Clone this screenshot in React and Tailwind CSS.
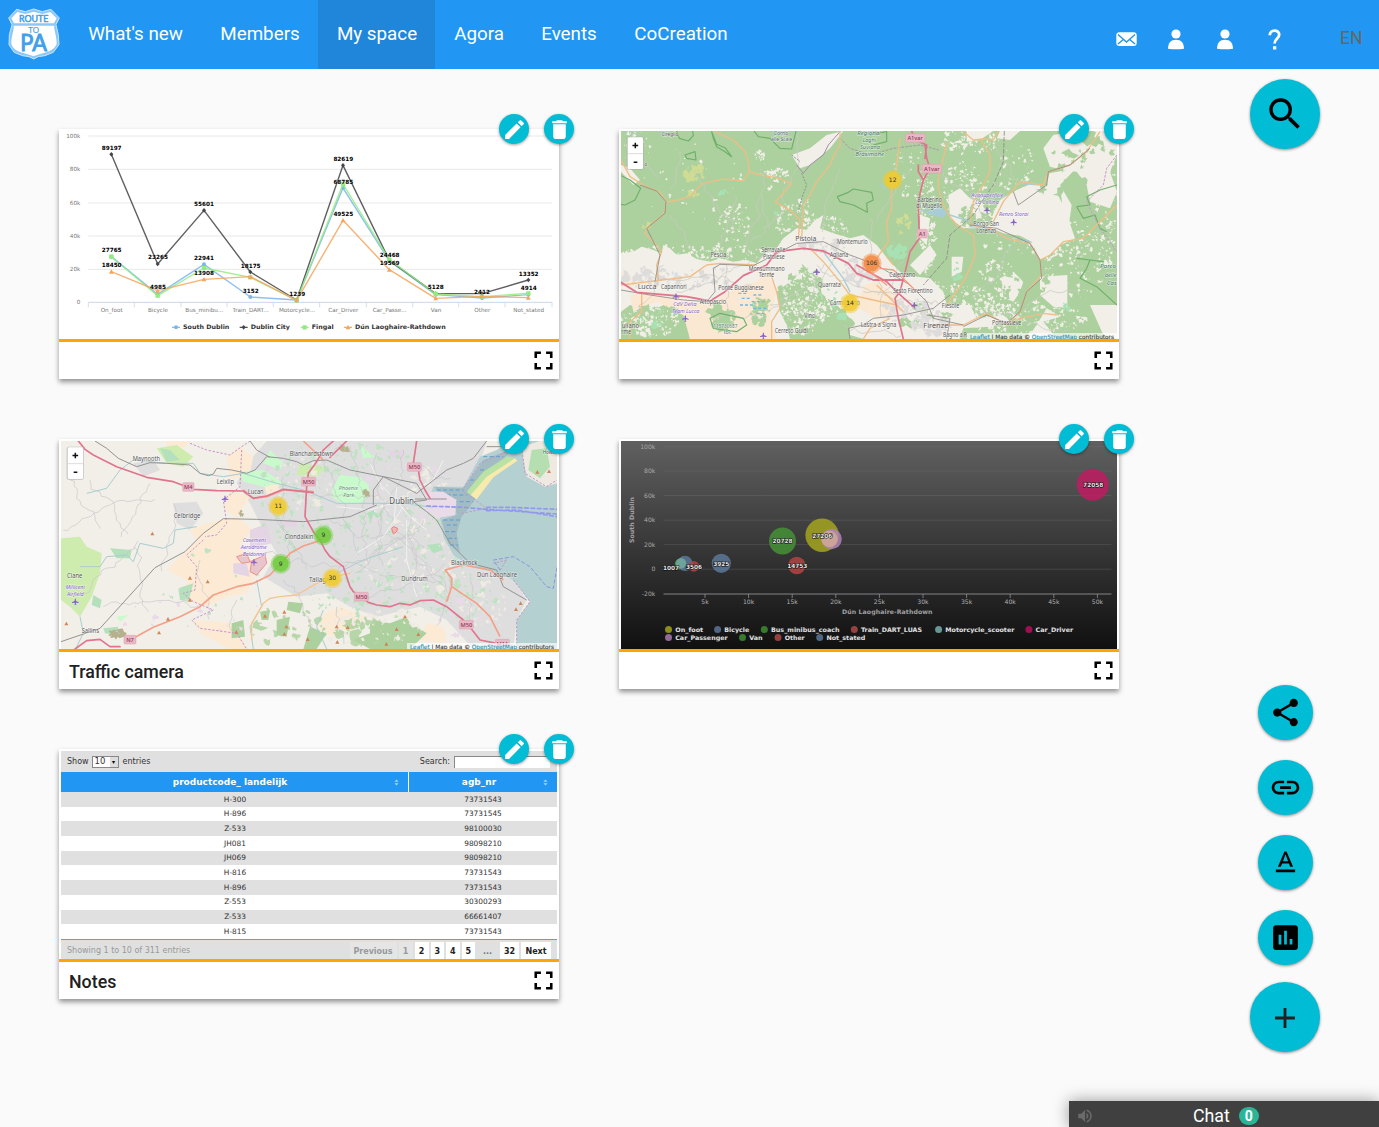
import React from "react";
import {
  MdEdit, MdDelete, MdSearch, MdShare, MdLink, MdTextFormat, MdAssessment, MdAdd, MdFullscreen, MdVolumeUp,
} from "react-icons/md";

const DEJAVU = '"DejaVu Sans", sans-serif';
const NOTO = '"Noto Sans", sans-serif';

/* ---------- helpers for the thumbnails ---------- */

function rng(seed) {
  let s = seed;
  return () => {
    s = (s * 16807) % 2147483647;
    return s / 2147483647;
  };
}

// Ragged specks scattered round cluster centres: [x, y, radiusX, radiusY, count]
function specks(clusters, seed, size) {
  const r = rng(seed);
  let d = "";
  for (const [cx, cy, rx, ry, n] of clusters) {
    for (let i = 0; i < n; i++) {
      const a = r() * Math.PI * 2;
      const k = Math.sqrt(r());
      const x = cx + Math.cos(a) * k * rx;
      const y = cy + Math.sin(a) * k * ry;
      const m = size * (0.3 + r() * r() * 1.5);
      for (let j = 0; j < 10; j++) {
        const t = (j / 10) * Math.PI * 2;
        const q = m * (0.25 + r() * 1.25);
        d += `${j ? "L" : "M"}${(x + Math.cos(t) * q).toFixed(1)} ${(y + Math.sin(t) * q).toFixed(1)}`;
      }
      d += "Z";
    }
  }
  return d;
}

// Wandering thin roads: [x, y, angle, steps]
function lanes(starts, seed) {
  const r = rng(seed);
  let d = "";
  for (const [sx, sy, ang, n] of starts) {
    let x = sx, y = sy;
    d += `M${x} ${y}`;
    for (let i = 0; i < n; i++) {
      const a = ang + (r() - 0.5) * 1.5;
      x += Math.cos(a) * 14;
      y += Math.sin(a) * 14;
      d += `L${x.toFixed(1)} ${y.toFixed(1)}`;
    }
  }
  return d;
}

function Line({ d, c, w = 3, ...rest }) {
  return <path d={d} fill="none" stroke={c} strokeWidth={w} strokeLinejoin="round" strokeLinecap="round" {...rest} />;
}

function Names({ items }) {
  return items.map(([t, x, y, w, s = 19, c = "#555", italic]) => (
    <text key={t + x} x={x} y={y} textLength={w} lengthAdjust="spacingAndGlyphs" fontSize={s} fill={c} fontStyle={italic ? "italic" : "normal"}
      stroke="#ffffff" strokeOpacity="0.6" strokeWidth="3" paintOrder="stroke" fontFamily={NOTO}>{t}</text>
  ));
}

function Plane({ x, y }) {
  return <path transform={`translate(${x} ${y})`} d="M0-10 2-6 2-2 10 2 10 4 2 3 1 8 4 10-4 10-1 8-2 3-10 4-10 2-2-2-2-6Z" fill="#8461c4" />;
}

function Shield({ t, x, y, w }) {
  return (
    <g>
      <rect x={x} y={y} width={w} height="26" rx="3" fill="#e9b8c4" stroke="#dc9db0" strokeWidth="1.500" />
      <text x={x + w / 2} y={y + 19} textAnchor="middle" fontSize="17" fill="#8a3a58" fontWeight="500" fontFamily={NOTO}>{t}</text>
    </g>
  );
}

function Cluster({ x, y, n, c }) {
  return (
    <g>
      <circle cx={x} cy={y} r="30" fill={c} opacity="0.45" />
      <circle cx={x} cy={y} r="24" fill={c} opacity="0.8" />
      <text x={x} y={y + 6} textAnchor="middle" fontSize="18" fill="#333" fontFamily={DEJAVU}>{n}</text>
    </g>
  );
}

function MapChrome() {
  return (
    <g fontFamily={DEJAVU}>
      <g>
        <rect x="50" y="80" width="51" height="99" rx="6" fill="#aaa" opacity="0.7" />
        <rect x="53" y="82" width="46" height="95" rx="4" fill="#fff" />
        <path d="M53 131h46" stroke="#ccc" strokeWidth="2" />
        <path d="M76 98v17M67.500 106.500h17M71 157h11" stroke="#111" strokeWidth="4.500" />
      </g>
      <rect x="1071" y="669" width="450" height="18" fill="#fff" opacity="0.65" />
      <text x="1080" y="688" fontSize="17.500" fill="#444" stroke="#444" strokeWidth="0.400" textLength="432" lengthAdjust="spacingAndGlyphs">
        <tspan fill="#2a94b8" stroke="#2a94b8" textDecoration="underline">Leaflet</tspan> | Map data © <tspan fill="#2a94b8" stroke="#2a94b8" textDecoration="underline">OpenStreetMap</tspan> contributors
      </text>
    </g>
  );
}

/* ---------- thumbnails ---------- */

const GRID_Y = [["100k", 93], ["80k", 193], ["60k", 294], ["40k", 393], ["20k", 493], ["0", 592]];
const CATS = ["On_foot", "Bicycle", "Bus_minibu...", "Train_DART...", "Motorcycle...", "Car_Driver", "Car_Passe...", "Van", "Other", "Not_stated"];
const SERIES = [
  { c: "#7cb5ec", shape: "dot", y: [455, 568, 478, 576, 585, 249, 468, 569, 579, 569] },
  { c: "#434348", shape: "diamond", y: [148, 477, 316, 501, 585, 181, 466, 566, 566, 525] },
  { c: "#90ed7d", shape: "square", y: [455, 572, 489, 517, 586, 237, 464, 567, 575, 565] },
  { c: "#f7a35c", shape: "tri", y: [500, 557, 523, 515, 586, 346, 494, 580, 574, 578] },
];
const POINTS = [
  ["89197", 185, 135], ["27765", 185, 441], ["18450", 185, 487], ["23265", 324, 463], ["4985", 324, 553], ["55601", 462, 303],
  ["22941", 462, 465], ["13908", 462, 509], ["18175", 602, 489], ["3152", 602, 563], ["1239", 742, 573], ["82619", 880, 168],
  ["68785", 880, 236], ["49525", 880, 332], ["24468", 1019, 457], ["19569", 1019, 481], ["5128", 1157, 553], ["2412", 1296, 566],
  ["13352", 1436, 512], ["4914", 1436, 555],
];

function Marker({ x, y, shape, c }) {
  if (shape === "dot") return <circle cx={x} cy={y} r="6" fill={c} />;
  if (shape === "diamond") return <path d={`M${x} ${y - 7}l6 7-6 7-6-7Z`} fill={c} />;
  if (shape === "square") return <rect x={x - 6.5} y={y - 6.5} width="13" height="13" rx="2" fill={c} />;
  return <path d={`M${x} ${y - 7}l7 13h-14Z`} fill={c} />;
}

function LineChart() {
  return (
    <svg viewBox="33 78 1488 624" className="block h-[208px] w-[496px]" fontFamily={DEJAVU}>
      {GRID_Y.map(([t, y]) => (
        <g key={t}>
          <path d={`M115 ${y}H1506`} stroke={t === "0" ? "#ccd6eb" : "#e8e8e8"} strokeWidth="3" />
          <text x="91" y={y + 6} fontSize="17" fill="#777" textAnchor="end">{t}</text>
        </g>
      ))}
      <path d="M115 592v15M253 592v15M393 592v15M531 592v15M670 592v15M809 592v15M949 592v15M1088 592v15M1226 592v15M1365 592v15M1506 592v15" stroke="#ccd6eb" strokeWidth="2.500" />
      {CATS.map((t, i) => (
        <text key={t} x={185 + i * 139} y="621" fontSize="17" fill="#777" textAnchor="middle">{t}</text>
      ))}
      {SERIES.map((s) => (
        <g key={s.c}>
          <Line d={"M" + s.y.map((y, i) => `${184 + i * 139} ${y}`).join("L")} c={s.c} w={4.2} opacity="0.85" />
          {s.y.map((y, i) => <Marker key={i} x={184 + i * 139} y={y} shape={s.shape} c={s.c} />)}
        </g>
      ))}
      {POINTS.map(([t, x, y]) => (
        <text key={t + x} x={x} y={y} fontSize="17.200" fontWeight="bold" textAnchor="middle" fill="#000" stroke="#fff" strokeWidth="2" strokeOpacity="0.5" paintOrder="stroke">{t}</text>
      ))}
      {[["South Dublin", 399, 139], ["Dublin City", 602, 118], ["Fingal", 785, 66], ["Dún Laoghaire-Rathdown", 915, 272]].map(([t, x, w], i) => (
        <g key={t}>
          <path d={`M${x - 33} 667h24`} stroke={SERIES[i].c} strokeWidth="3.500" />
          <Marker x={x - 21} y={667} shape={SERIES[i].shape} c={SERIES[i].c} />
          <text x={x} y="673" fontSize="18.500" fontWeight="bold" fill="#333" textLength={w} lengthAdjust="spacingAndGlyphs">{t}</text>
        </g>
      ))}
    </svg>
  );
}

function TuscanyMap() {
  return (
    <svg viewBox="33 78 1488 624" className="block h-[208px] w-[496px]">
      <rect x="33" y="78" width="1488" height="624" fill="#add19e" />
      <g fill="#f2efe9">
        <path d="M33 445 70 440 95 425 130 435 155 445 160 420 180 430 200 450 230 445 260 462 300 470 330 460 370 470 410 465 440 475 470 440 500 430 520 400 560 370 590 375 610 350 640 330 630 370 670 385 720 400 760 390 800 420 840 470 880 510 960 520 1000 560 1010 600 1080 600 1100 640 1180 630 1200 650 1140 665 1060 670 1050 702 760 702 720 690 720 640 680 600 640 570 600 560 570 520 540 530 500 560 510 620 530 660 540 702 240 702 230 640 180 590 120 620 60 600 33 620Z" />
        <path d="M1145 335 1170 285 1220 255 1260 238 1310 240 1318 205 1370 195 1400 188 1350 240 1385 300 1378 350 1395 400 1350 420 1320 450 1290 465 1265 410 1230 392 1180 385 1140 368Z" />
        <path d="M1300 130 1330 90 1400 78 1521 78 1521 150 1500 200 1521 260 1500 310 1440 290 1430 240 1400 200 1360 195 1320 185Z" />
        <path d="M1290 515 1372 510 1372 608 1330 605 1290 570Z M1015 270 1050 250 1080 280 1110 290 1130 320 1150 350 1140 370 1060 370 1020 340Z M1025 455 1060 455 1055 500 1025 515Z M1170 520 1210 500 1240 530 1230 560 1210 590 1160 570Z M1070 78H1150L1110 105 1070 110Z M1170 78H1230L1200 105 1160 100Z M1310 610 1350 635 1300 650 1340 702H1250L1280 660Z M1440 600 1521 600 1521 702 1480 690Z" />
        <path d="M33 180 60 190 90 225 70 240 33 200Z M545 150 600 130 650 90 700 78 660 130 600 180 570 190Z M900 480 960 420 980 450 930 510Z M930 330 960 340 950 420 930 400Z" />
      </g>
      <g fill="#fbe8d3">
        <path d="M60 570 110 560 230 590 300 600 340 570 400 540 440 530 470 500 500 560 480 640 500 702 240 702 220 630 140 590 70 620Z M760 540 800 530 860 570 880 620 800 640 745 610Z" />
        <path d="M33 500 80 520 120 540 60 545 33 530Z M780 580 850 560 880 600 840 640 770 620Z" opacity="0.8" />
      </g>
      <path d={specks([[340, 640, 40, 30, 30], [450, 620, 30, 40, 22], [580, 580, 70, 90, 90], [1230, 540, 90, 80, 40], [640, 650, 80, 50, 60], [120, 650, 90, 45, 80], [940, 640, 70, 30, 16], [1090, 340, 60, 40, 20], [1350, 200, 90, 70, 14], [1440, 130, 70, 40, 14]], 51, 13)} fill="#add19e" />
      <path d={specks([[200, 450, 170, 30, 120], [350, 450, 120, 30, 90], [370, 360, 50, 60, 60], [560, 360, 60, 90, 110], [640, 380, 80, 50, 110], [620, 560, 100, 80, 240], [950, 360, 30, 150, 130], [1060, 260, 60, 90, 130], [1200, 330, 120, 120, 120], [1010, 600, 150, 70, 240], [1400, 460, 110, 120, 130], [1250, 640, 180, 50, 220], [1160, 560, 70, 100, 120], [500, 205, 50, 12, 40], [120, 650, 90, 45, 130], [1080, 110, 90, 40, 90], [1220, 180, 60, 60, 30], [80, 130, 40, 60, 40], [450, 155, 16, 14, 14], [560, 640, 90, 50, 130], [1490, 300, 30, 190, 80], [300, 230, 240, 120, 40], [900, 200, 50, 80, 40], [1340, 430, 110, 35, 70]], 7, 4.6)} fill="#f2efe9" />
      <path d={specks([[130, 520, 90, 40, 50], [640, 420, 70, 20, 40], [740, 500, 50, 40, 40], [900, 620, 90, 40, 70], [960, 660, 60, 30, 50], [290, 520, 100, 40, 30]], 19, 9)} fill="#dedbdb" />
      <path d={specks([[250, 205, 35, 20, 22], [245, 265, 22, 9, 10], [110, 360, 20, 10, 3], [880, 360, 16, 30, 10]], 4, 9)} fill="#d0dc94" />
      <path d={specks([[345, 262, 14, 12, 6], [860, 440, 30, 20, 34], [1040, 500, 10, 30, 8], [500, 320, 10, 10, 2], [1370, 600, 20, 12, 5], [120, 640, 60, 30, 12], [660, 600, 60, 50, 12]], 9, 8)} fill="#a8e2b4" />
      <path d={lanes([[60, 140, 0.9, 9], [180, 250, -1.2, 9], [330, 420, -1.3, 12], [420, 440, -1.4, 14], [250, 200, 0.9, 18], [450, 190, 1.5, 14], [560, 90, 1.8, 16], [690, 190, 1.6, 15], [780, 340, 1.6, 18], [900, 190, 1.9, 14], [200, 560, -0.4, 24], [120, 500, 0.2, 24], [300, 640, -0.3, 19], [620, 480, 0.4, 22], [760, 560, 0.1, 18], [1000, 200, 0.9, 17], [1160, 130, 1.1, 10], [1400, 560, 2.8, 15], [1090, 610, 0.1, 23], [560, 640, -0.9, 18], [80, 640, -1.1, 14], [1200, 420, 2.3, 16], [350, 480, 1.9, 10], [700, 660, 0.1, 14], [880, 470, 2, 14], [480, 600, -0.7, 16], [180, 330, 0.9, 9], [520, 300, 2.2, 12]], 33)} fill="none" stroke="#c9c9c4" strokeWidth="2.200" strokeLinejoin="round" />
      <g fill="none" stroke="#6fb06a" strokeWidth="3.500" strokeLinejoin="round">
        <path d="M200 78 208 100 235 108 250 92 248 78M305 80 320 118 345 128 365 155 345 140 320 125 310 100ZM432 78 445 95 480 100 510 130 545 132 558 78M33 212 60 225 92 250 75 285 45 300 33 298M682 275 715 262 730 252 785 262 790 285 770 295 772 322 730 300 690 290ZM225 150 255 140 258 165 230 160ZM300 640 330 625 400 640 410 660 380 680 310 670Z" />
        <path d="M780 90 830 80 830 110 790 120M1400 305 1440 300 1430 275 1470 255 1521 240M1400 305 1420 340 1455 330 1470 370 1490 380M1400 460 1440 465 1430 490 1410 520 1460 545 1521 600M1440 465 1480 470" />
      </g>
      <g fill="none" stroke="#a88bb0" strokeWidth="3">
        <path d="M560 180 580 205 600 180 640 150 655 120 690 80" /><path d="M575 205 590 240 575 280 565 320M545 150 570 170" stroke="#8f8f94" strokeDasharray="6 4" />
      </g>
      <Line d="M690 100 720 130 780 150 850 130 930 120 985 135" c="#a595a5" w={3} strokeDasharray="6 6" />
      <Line d="M1521 150 1490 190 1480 240 1430 290 1450 330 1470 370 1521 440" c="#c49ac8" w={3} strokeDasharray="6 6" />
      <Line d="M1080 350 1020 330 980 300 930 320M1080 365 1130 370 1190 400 1260 410M830 250 810 240M1230 235 1290 240M720 560 700 520 640 440" c="#a8cdd8" w={4} />
      <path d="M945 320 975 312 985 300 1000 318 1012 322 1000 338 975 332 955 328Z" fill="#a8cdd8" />
      <path d="M385 565h28M395 580h30M390 600h45M430 570h28M425 590h45M430 610h40M440 625h25" stroke="#72b8dc" strokeWidth="4" strokeDasharray="9 6" />
      <g fill="none" stroke="#f0bd86" strokeWidth="4" strokeLinejoin="round">
        <path d="M33 165 60 215 100 240 150 262 170 290 160 330 125 355 105 385 130 410 155 440 140 480 145 530M165 292 205 285 240 275 262 250 280 235 340 222 400 228 418 200 450 210 500 218 545 235 520 265 495 290 520 305 545 320 570 345 565 400M418 200 414 165 405 140 385 120 370 105 315 80M690 80 690 120 672 150 660 180 640 205 620 230 600 270 580 300 575 400M480 500 500 560 510 610 485 650 485 702M440 480 330 475 290 480 240 515 33 540M95 560 95 620 60 650 60 702M600 430 640 470 690 530 720 570 860 600M760 702 780 670 840 640" />
        <path d="M870 100 860 180 845 260 845 310 830 350 835 410 800 460M1010 110 1000 160 985 220 985 250 1000 300 1020 335 1040 360 1090 390 1095 450 1080 490 1060 530 1010 600M1060 80 1090 105 1120 102 1150 105 1165 78M1110 100 1140 150 1140 200 1120 240 1090 290 1080 355M1150 350 1180 290 1230 230 1300 240 1315 200 1380 180 1430 140 1470 80M1080 360 1140 370 1190 400 1260 415 1290 465 1320 450 1360 410 1420 400 1460 360 1521 300M1290 465 1295 510 1250 560 1230 620 1190 660 1130 625 1060 660 960 660M1190 660 1230 640 1300 625 1340 630M800 540 840 580 880 620M850 480 830 455" />
      </g>
      <g fill="none" stroke="#918b8b" strokeWidth="2.600" strokeLinejoin="round">
        <path d="M90 240 140 258 168 290 165 325 110 370 125 400 150 450 135 530M33 555 120 570 220 585 290 590 315 560 310 490 330 478 430 482 560 415 640 410 720 450 800 480 900 540 950 590 970 640 1060 660M720 702 715 670 760 660 790 640 880 630 970 610 1020 570M1080 360 1160 370 1260 415 1290 465 1295 520 1250 560 1230 620 1190 655 1130 630 1060 665M1210 260 1225 300 1310 240 1315 200 1380 180 1440 130M950 630 1020 640 1010 702" />
        <path d="M1183 78 1180 170 1150 240 1115 290 1090 330 1020 390 1010 460 940 540" strokeDasharray="14 4" />
      </g>
      <Line d="M33 532 80 562 150 568 230 575 300 588 345 560 400 512 470 480 500 440 580 430 640 438 715 475 740 505 790 525 880 525" c="#e0748d" w={5.5} />
      <Line d="M905 78 915 105 950 120 945 160M925 180 925 200 940 225 930 265 925 300 928 400 900 440 888 490 870 560 855 580 865 640 880 702M740 480 830 530 860 560 910 605M945 120 950 160 960 190 940 225" c="#e0748d" w={5} />
      <Line d="M810 490 850 495 890 530 920 560M780 500 830 540" c="#f29a7c" w={4} />
      <Shield t="A1var" x={886} y={86} w={59} />
      <Shield t="A1var" x={936} y={178} w={59} />
      <Shield t="A1" x={921} y={373} w={31} />
      <Names items={[
        ["Cireglio", 155, 93, 50, 16], ["Corno", 491, 89, 44, 16, "#567"], ["alle Scale", 483, 109, 64, 17, "#567"], ["Pistoia", 556, 408, 63, 23], ["Serravalle", 454, 442, 72], ["Pistoiese", 459, 461, 65],
        ["Montemurlo", 681, 417, 92], ["Agliana", 659, 455, 56], ["Pescia", 302, 457, 47], ["Monsummano", 416, 497, 108], ["Terme", 446, 517, 47],
        ["Lucca", 83, 553, 56, 22], ["Capannori", 153, 553, 77], ["Ponte Buggianese", 325, 555, 136], ["Altopascio", 269, 597, 79], ["Quarrata", 624, 546, 68],
        ["Carmignano", 660, 599, 90], ["Vinci", 583, 639, 34], ["Cerreto Guidi", 494, 685, 100], ["uliano", 35, 668, 52], ["rme", 34, 688, 29], ["115730687", 310, 668, 72, 17, "#577"], ["loc", 341, 687, 24, 15, "#577"],
        ["Barberino", 922, 291, 74], ["di Mugello", 919, 309, 78], ["Borgo San", 1090, 364, 77], ["Lorenzo", 1099, 384, 60], ["Calenzano", 838, 516, 78], ["Sesto Fiorentino", 849, 564, 119],
        ["Fiesole", 995, 610, 53], ["Firenze", 940, 668, 75, 23], ["Lastra a Signa", 752, 667, 107], ["Pontassieve", 1146, 659, 88], ["Bagno a R", 999, 696, 72],
        ["Regional", 742, 91, 70, 16, "#476", 1], ["Laghi", 758, 110, 40, 16, "#476", 1], ["Suviana", 750, 132, 60, 16, "#476", 1], ["Brasimone", 736, 153, 86, 16, "#476", 1],
        ["Aviosuperficie", 1084, 276, 96, 17, "#8461c4", 1], ["La Collina", 1096, 298, 70, 17, "#8461c4", 1], ["Renzo Storai", 1167, 333, 88, 17, "#8461c4", 1],
        ["Parco", 1470, 489, 48, 18, "#476", 1], ["delle", 1484, 515, 36, 18, "#476", 1], ["Cas", 1490, 541, 30, 18, "#476", 1],
        ["CdV Delta", 190, 602, 70, 17, "#8461c4", 1], ["Team Lucca", 186, 623, 82, 17, "#8461c4", 1], ["o", 103, 183, 9, 16],
      ]} />
      {[[198, 574], [226, 640], [620, 500], [460, 692], [1131, 315], [1211, 351], [913, 600]].map(([x, y]) => <Plane key={x} x={x} y={y} />)}
      <Cluster x={848} y={225} n="12" c="#f1ca2c" />
      <Cluster x={785} y={475} n="106" c="#f4873c" />
      <Cluster x={720} y={595} n="14" c="#f1ca2c" />
      <g transform="translate(0 15)"><MapChrome /></g>
    </svg>
  );
}

function DublinMap() {
  return (
    <svg viewBox="33 63 1488 624" className="block h-[208px] w-[496px]">
      <rect x="33" y="63" width="1488" height="624" fill="#f2efe9" />
      <path d="M560 190 600 120 650 63H1310L1290 130 1250 200 1200 250 1180 340 1230 420 1330 450 1390 480 1430 540 1400 600 1390 687H1270L1190 600 1110 560 980 590 900 560 830 520 740 530 690 500 640 470 680 400 640 330 600 250ZM370 250 440 245 460 280 420 330 380 310ZM250 130 310 120 330 150 280 170Z" fill="#dfdedf" />
      <g fill="#fcead5">
        <path d="M530 110 570 80 610 110 600 160 540 180ZM350 63 420 63 400 85 350 80ZM470 310 560 290 610 330 570 370 620 460 590 520 530 530 470 560 400 530 410 480 350 450 440 360 420 330ZM540 210 600 230 560 290 520 270ZM430 600 560 610 590 687H540L450 640ZM820 580 870 560 950 590 900 640 850 650 800 620ZM640 185 680 175 690 215 650 225ZM1130 610 1180 620 1190 670 1100 660Z" />
      </g>
      <path d="M600 330 650 310 665 370 600 385ZM550 430 590 430 600 470 550 460ZM640 110 690 115 680 140 650 150ZM700 300 740 300 740 320 700 320ZM1140 210 1220 230 1220 265 1150 290ZM1020 90 1060 90 1060 120 1020 110Z" fill="#e5d4e4" />
      <g fill="#cfecaf">
        <path d="M33 355 90 350 110 380 155 400 150 460 125 530 90 590 60 560 33 540ZM320 85 380 75 430 110 400 140 350 130ZM750 130 830 140 800 170 740 165Z" />
      </g>
      <g fill="#c8facc">
        <path d="M870 165 930 172 955 195 960 225 935 248 880 252 850 235 845 210ZM660 90 700 130 690 150 640 130ZM570 155 640 150 700 190 640 200 580 185ZM200 590 235 585 210 605ZM930 78 975 110 940 115Z" />
      </g>
      <g fill="#b5e0bc">
        <path d="M180 385 245 390 240 415 200 415ZM130 525 155 540 150 565 125 555ZM385 505 430 490 415 545 390 540ZM160 625 205 620 200 645 165 640ZM330 85 360 90 390 120 350 125ZM950 280 970 270 990 290 960 300ZM1130 375 1170 370 1180 390 1150 400Z" />
      </g>
      <g fill="#add19e">
        <path d="M545 610 580 600 585 650 545 655ZM630 575 660 570 655 600 635 600ZM680 600 720 590 710 650 680 645ZM715 545 760 550 750 580 710 570ZM960 600 1020 610 1070 590 1090 630 1060 687 960 687 910 660 840 687 960 640ZM1010 640 1100 620 1130 640 1080 687 1010 687ZM780 620 830 640 800 687 760 687Z" />
      </g>
      <path d={specks([[1050, 420, 230, 180, 230], [740, 240, 120, 160, 130], [920, 120, 160, 50, 80], [1250, 530, 100, 80, 70], [900, 530, 120, 60, 60], [500, 500, 180, 140, 20]], 21, 6)} fill="#bfe3c2" />
      <path d={specks([[1080, 230, 120, 100, 60], [1100, 430, 160, 90, 80], [1300, 560, 70, 80, 50], [750, 180, 100, 90, 50], [880, 620, 90, 50, 40], [980, 620, 150, 50, 50]], 77, 7)} fill="#efeae2" />
      <path d={specks([[980, 640, 130, 40, 60], [760, 620, 70, 50, 14], [650, 610, 60, 60, 10]], 57, 13)} fill="#add19e" opacity="0.85" />
      <path d={specks([[200, 640, 16, 10, 6], [575, 280, 10, 10, 5], [950, 215, 8, 14, 6], [880, 85, 18, 8, 10]], 13, 8)} fill="#b5b08d" />
      <path d={specks([[1060, 220, 130, 110, 30], [1230, 600, 60, 70, 14], [470, 575, 160, 90, 12], [300, 600, 90, 50, 6]], 92, 7)} fill="#ead9e8" />
      <path d={lanes([[60, 180, 1, 14], [120, 180, 0.9, 16], [300, 190, 1.9, 14], [40, 330, -0.3, 22], [100, 520, -0.8, 18], [250, 380, 1.4, 16], [160, 560, 0.2, 22], [370, 250, 1.8, 16], [450, 420, 1.4, 14], [560, 540, 1.4, 9], [650, 250, 1.2, 18], [700, 170, 1.5, 20], [730, 220, 0.1, 20], [640, 400, 0.1, 19], [820, 90, 1.4, 26], [900, 80, 1.5, 28], [980, 100, 1.4, 26], [1060, 90, 1.8, 26], [840, 300, 0.3, 24], [830, 400, 0.3, 28], [860, 460, -0.4, 22], [1000, 250, 0.9, 22], [1060, 240, 1.5, 22], [1080, 130, 0.2, 10], [920, 540, -0.3, 22], [1040, 350, 0.8, 17], [1190, 450, 1.6, 13], [860, 560, 1.4, 9], [1120, 300, 2.4, 20], [1260, 480, 1.9, 11], [700, 480, 0.9, 14]], 15)} fill="none" stroke="#c6c4c8" strokeWidth="1.900" />
      <g fill="none" stroke="#fff" strokeWidth="2.500">
        <path d="M860 260 960 270 1060 240M1000 200 1080 290 1130 330M1040 200 1030 330M1060 260 1000 350 920 400M960 130 1000 210M1070 220 1150 180 1180 120M1070 300 1070 420 1100 530" opacity="0.7" />
      </g>
      <path d="M1380 63H1521V687H1400L1400 600 1440 545 1390 480 1330 455 1260 440 1210 405 1180 350 1170 295 1130 255 1150 200 1240 200 1290 110 1340 90Z" fill="#b5d0d0" />
      <path d="M1150 200 1240 205 1300 120 1390 85 1350 130 1290 210 1260 260 1235 290 1220 340 1230 400 1195 370 1175 300 1220 285 1215 255Z" fill="#a3bcc4" />
      <path d="M1160 210h80M1190 225h60M1210 245h60M1260 180h20M1290 150h20M1300 110h60M1180 300h50M1190 315h35M1185 335h35M1195 355h25M1200 375h25" stroke="#5a9ed4" strokeWidth="3" strokeDasharray="12 7" />
      <path d="M1130 215 1180 215 1220 240 1215 285 1160 295 1120 260Z" fill="#e9dbe8" />
      <path d="M1250 215 1300 155 1370 110 1395 115 1330 160 1275 235Z" fill="#b9e2a4" /><path d="M1262 225 1310 170 1395 115 1402 122 1330 172 1280 238Z" fill="#f8eaac" />
      <path d="M1415 80 1470 63H1521V190L1485 200 1430 170 1420 120Z" fill="#eeeae2" /><path d="M1445 90 1490 85 1500 140 1470 175 1435 150Z" fill="#b5dfb0" />
      <g fill="none" stroke="#c693cb" strokeWidth="3" strokeDasharray="7 5">
        <path d="M420 70 470 90 540 105 575 80 600 63M575 90 570 200 520 240 530 310 500 345 465 350M460 360 410 405 440 440 435 510 400 520 430 545 490 570 425 600 450 625 560 640 590 687M1240 205 1290 130 1380 90M1235 280 1310 265 1240 215M1415 80 1425 160 1490 200 1521 180M1350 450 1370 420 1330 430M1390 480 1440 545 1400 600V687" />
      </g>
      <path d="M560 410 590 400 600 425 645 405 650 430 620 465 600 455 605 425 575 430Z" fill="#e8c4cc" stroke="#ef8f8f" strokeWidth="3" />
      <g fill="none" stroke="#a8cdd0" strokeWidth="3" strokeLinejoin="round">
        <path d="M110 220 170 205 210 150 250 120 350 130 430 130 450 160 520 170 580 160 680 190 760 210 860 250 1060 250 1150 262M90 440 150 440 170 410 230 405 250 425 270 370 340 385 370 370 375 330 440 320M90 590 100 640 80 680M620 480 635 560 600 620 610 687M820 570 800 620 830 687M860 460 940 420 1060 380" />
      </g>
      <g fill="none" stroke="#949292" strokeWidth="3" strokeLinejoin="round">
        <path d="M135 63 170 85 205 115 260 140 300 128 350 130 420 135 450 160 475 167 490 162 500 145 545 150 590 160 615 150 650 110 700 115 740 125 760 135 790 122 830 120 900 150 1000 170 1100 190 1130 240 1090 245 1130 275 1160 300 1200 370 1260 430 1340 450 1360 500 1430 540M600 63 620 90 660 112M33 665 150 625 315 443 405 395 460 340 520 296 620 298 760 305 900 290 980 255M970 255 970 210 1000 170 1060 200 1100 220 1190 150 1240 130 1270 115 1310 63M1095 237H1190M1310 80H1400" />
      </g>
      <g fill="none" stroke="#f4a088" strokeWidth="5" strokeLinejoin="round">
        <path d="M250 655 310 622 390 590 450 560 490 525 560 500 610 490 660 465 720 400 760 378 800 365 840 345M1185 450 1240 435 1320 450 1360 480M1185 450 1205 475 1205 500 1190 545M1205 500 1280 550 1320 590 1350 650M580 210 610 235 650 230 700 210 790 215M760 63 820 120" />
      </g>
      <Line d="M605 660V610L640 550 660 535 690 530 740 525 800 490 850 470 900 460" c="#f5c58c" w={4} />
      <Line d="M85 63 105 88 130 105 200 140 290 172 370 185 430 208 500 212 580 213 610 235 650 228 700 208 790 218" c="#e0748d" w={5} />
      <Line d="M75 687 110 662 150 658 180 680 210 680M850 63 820 90 800 125 775 160 770 200 765 290 790 335 810 360 825 390 840 410 860 425 880 440 900 500 910 515 930 530 955 547 980 555 1020 560 1050 550 1080 555 1110 542 1150 540 1190 560 1240 600 1265 628 1290 660 1340 670M1100 63 1090 130 1105 150 1110 180 1125 210 1140 235M840 112 890 63" c="#e0748d" w={5} />
      <Line d="M1130 258 1240 262 1310 268 1521 282M1310 262 1380 262 1521 268M1310 272 1400 270 1521 290" c="#929ae8" w={5} strokeDasharray="11 8" />
      <Line d="M1350 450 1330 420 1390 410 1440 440 1490 500 1510 505 1521 440" c="#8a96e0" w={3} strokeDasharray="10 8" />
      <path d="M1025 325 1030 320 1043 325 1040 335 1030 342Z" fill="#f4b4b4" stroke="#ee8080" strokeWidth="3" />
      <Shield t="M4" x={398} y={188} w={34} /><Shield t="M50" x={755} y={172} w={42} /><Shield t="M50" x={1072} y={128} w={42} />
      <Shield t="M50" x={913} y={517} w={42} /><Shield t="M50" x={1228} y={601} w={42} /><Shield t="N7" x={222} y={646} w={36} /><Shield t="M11" x={1336} y={658} w={42} />
      {[[307, 341], [420, 474], [473, 485], [420, 540], [354, 597], [327, 638], [49, 611], [559, 636], [645, 588], [703, 576], [709, 620], [703, 642], [773, 658], [860, 620], [893, 622], [862, 666], [1009, 672], [1040, 628], [1065, 590], [1105, 643], [1462, 156], [1497, 154], [1412, 550], [1398, 568]].map(([x, y]) => (
        <path key={`${x}-${y}`} d={`M${x} ${y - 6}l6 11h-12Z`} fill="#d08556" />
      ))}
      <Names items={[
        ["Maynooth", 248, 122, 82], ["Leixlip", 500, 193, 52], ["Lucan", 593, 222, 48], ["Celbridge", 371, 294, 80], ["Clondalkin", 704, 357, 86], ["Clane", 51, 475, 46],
        ["Sallins", 95, 638, 52], ["Blanchardstown", 719, 107, 130], ["Tallaght", 777, 487, 70], ["Dublin", 1018, 252, 74, 25], ["Dundrum", 1054, 483, 79], ["Blackrock", 1203, 434, 79], ["Dún Laoghaire", 1281, 471, 120],
        ["Howth", 1478, 103, 42, 17], ["Phoenix", 866, 209, 58, 17, "#5a8a70", 1], ["Park", 880, 230, 32, 17, "#5a8a70", 1], ["Casement", 578, 365, 70, 17, "#8461c4", 1], ["Aerodrome", 572, 387, 78, 17, "#8461c4", 1], ["Baldonnel", 578, 409, 70, 17, "#8461c4", 1],
        ["Millicent", 47, 506, 58, 17, "#8461c4", 1], ["Airfield", 51, 528, 50, 17, "#8461c4", 1],
      ]} />
      <Plane x={525} y={236} /><Plane x={612} y={426} /><Plane x={76} y={545} />
      <Cluster x={685} y={259} n="11" c="#f1ca2c" /><Cluster x={820} y={346} n="9" c="#6ecc39" />
      <Cluster x={692} y={431} n="9" c="#6ecc39" /><Cluster x={847} y={475} n="30" c="#f1ca2c" />
      <MapChrome />
    </svg>
  );
}

const BUBBLES = [
  [822.1, 535.2, 16.7, "#a5a51e"], [721.3, 563.3, 9.6, "#5c7898"], [782.5, 541, 13.5, "#449035"], [796.8, 565.5, 8.7, "#b04444"],
  [680, 564, 5.3, "#3c9838"], [685, 563.3, 7.6, "#5c7898"], [693.8, 566.3, 5.4, "#b04444"], [681, 563.3, 5.2, "#72aaa0"],
  [1092.8, 484.7, 16, "#c01c60"], [831.6, 539, 10.2, "#b084b8"], [829.5, 539, 8.300, "#d0a898"],
];
const BUBBLE_TEXT = [["72058", 1093.2, 487], ["27206", 822.3, 537.500], ["20728", 782.5, 543.300], ["14753", 797.3, 567.700], ["3925", 721.3, 565.500], ["3506", 694, 568.600], ["1007", 671, 569.500]];
const BUBBLE_LEGEND = [
  ["On_foot", 675.2, 632, 28, "#8d8d18"], ["Bicycle", 724.3, 632, 25, "#4f6684"], ["Bus_minibus_coach", 771, 632, 68.5, "#377a2c"], ["Train_DART_LUAS", 861, 632, 61, "#964040"],
  ["Motorcycle_scooter", 945.3, 632, 69, "#669893"], ["Car_Driver", 1035.6, 632, 37.5, "#a01050"], ["Car_Passenger", 675.2, 640, 52.5, "#916a98"], ["Van", 749.2, 640, 13.5, "#377a2c"], ["Other", 784.7, 640, 20, "#964040"], ["Not_stated", 826.4, 640, 39, "#4f6684"],
];

function BubbleChart() {
  return (
    <svg viewBox="621 441 496 208" className="block h-[208px] w-[496px]" fontFamily={DEJAVU}>
      <defs>
        <linearGradient id="dusk" x1="0" y1="0" x2="0" y2="1"><stop offset="0" stopColor="#606060" /><stop offset="1" stopColor="#101010" /></linearGradient>
      </defs>
      <rect x="621" y="441" width="496" height="208" fill="url(#dusk)" />
      {[["100k", 446.5], ["80k", 471], ["60k", 495.500], ["40k", 520.200], ["20k", 544.700], ["0", 569.200], ["-20k", 594]].map(([t, y]) => (
        <g key={t}>
          <path d={`M663.500 ${y}H1111.500`} stroke={t === "-20k" ? "#909094" : "#707073"} strokeWidth={t === "-20k" ? 0.9 : 0.6} opacity={t === "-20k" ? 1 : 0.6} />
          <text x="655.300" y={y + 2.2} fontSize="6.100" fill="#a8a8aa" textAnchor="end">{t}</text>
        </g>
      ))}
      {["5k", "10k", "15k", "20k", "25k", "30k", "35k", "40k", "45k", "50k"].map((t, i) => (
        <g key={t}>
          <path d={`M${705 + i * 43.6} 594v4`} stroke="#909094" strokeWidth="0.800" />
          <text x={705 + i * 43.6} y="604" fontSize="6.100" fill="#b0b0b2" textAnchor="middle">{t}</text>
        </g>
      ))}
      <text x="842" y="614.200" fontSize="6.200" textLength="90.500" fill="#a0a0a3" fontWeight="bold">Dún Laoghaire-Rathdown</text>
      <text transform="translate(634 543) rotate(-90)" fontSize="6.200" textLength="46" fill="#a0a0a3" fontWeight="bold">South Dublin</text>
      {BUBBLES.map(([x, y, r, c], i) => <circle key={i} cx={x} cy={y} r={r} fill={c} opacity="0.85" />)}
      {BUBBLE_TEXT.map(([t, x, y]) => (
        <text key={t} x={x} y={y} fontSize="5.800" fontWeight="bold" textAnchor="middle" fill="#e8e8e8" stroke="#000" strokeWidth="1" paintOrder="stroke">{t}</text>
      ))}
      {BUBBLE_LEGEND.map(([t, x, y, w, c]) => (
        <g key={t}>
          <circle cx={x - 6.7} cy={y - 2.5} r="3.500" fill={c} />
          <text x={x} y={y} fontSize="6.200" fontWeight="bold" fill="#e0e0e3" textLength={w} lengthAdjust="spacingAndGlyphs">{t}</text>
        </g>
      ))}
    </svg>
  );
}

const ROWS = [
  ["H-300", "73731543"], ["H-896", "73731545"], ["Z-533", "98100030"], ["JH081", "98098210"], ["JH069", "98098210"],
  ["H-816", "73731543"], ["H-896", "73731543"], ["Z-553", "30300293"], ["Z-533", "66661407"], ["H-815", "73731543"],
];

function Sort() {
  return (
    <svg viewBox="0 0 6 8" className="h-[7px] w-[5px]"><path d="M.5 3.200 3 .400 5.500 3.200ZM.5 4.800 3 7.600 5.500 4.800Z" fill="#a9d5fa" /></svg>
  );
}

function DataTable() {
  return (
    <div className="h-[208px] w-[496px] overflow-hidden bg-[#e0e0e0] font-['DejaVu_Sans',sans-serif] text-[7.4px] leading-none text-[#333]">
      <div className="flex h-[21px] items-center pl-[6px] pr-[7px] text-[8px]">
        <span>Show</span>
        <span className="ml-[3px] mr-1 flex h-[12px] w-[27px] items-center justify-between border border-[#888] bg-white pl-0.5 text-[8.5px]">
          10
          <span className="flex h-full w-[8px] items-center justify-center bg-[#ddd] text-[6px] text-black">▾</span>
        </span>
        <span>entries</span>
        <span className="ml-auto">Search:</span>
        <span className="ml-[4px] h-[12px] w-[96px] border-l border-t border-[#888] bg-white" />
      </div>
      <div className="flex h-[20px] bg-[#2196f3] text-[9px] font-bold text-white">
        <div className="flex w-[348px] items-center border-r border-white pr-[9px]">
          <span className="flex-1 pl-[5px] text-center">productcode_ landelijk</span>
          <Sort />
        </div>
        <div className="flex flex-1 items-center pr-[9px]">
          <span className="flex-1 pl-[6px] text-center">agb_nr</span>
          <Sort />
        </div>
      </div>
      {ROWS.map(([a, b], i) => (
        <div key={i} className={`flex h-[14.7px] items-center text-center ${i % 2 ? "bg-white" : "bg-[#e0e0e0]"}`}>
          <span className="w-[348px]">{a}</span>
          <span className="flex-1">{b}</span>
        </div>
      ))}
      <div className="h-px bg-[#4ba5ef]" />
      <div className="flex h-[24px] items-start pl-[6px] pr-[6px] pt-[2px] text-[8px] text-[#999]">
        <span className="pt-[5px]">Showing 1 to 10 of 311 entries</span>
        <div className="ml-auto flex gap-[2px] font-bold text-[#222]">
          {[["Previous", "w-[47px] text-[#999] bg-[#e5e5e5]"], ["1", "w-[14px] text-[#999] bg-[#e5e5e5]"], ["2", "w-[14px] bg-white"], ["3", "w-[13.5px] bg-white"], ["4", "w-[13.5px] bg-white"], ["5", "w-[13.5px] bg-white"], ["...", "w-[21px] text-[#777]"], ["32", "w-[19px] bg-white"], ["Next", "w-[30px] bg-white"]].map(([t, c]) => (
            <span key={t} className={`h-[20px] pt-[6px] text-center ${c}`}>{t}</span>
          ))}
        </div>
      </div>
    </div>
  );
}

/* ---------- page ---------- */

function Card({ title, children }) {
  return (
    <article className="relative h-[250px] w-[500px] bg-white shadow-[0_3px_5px_rgba(0,0,0,0.42)]">
      <div className="h-[210px] px-[2px] pt-[2px]">{children}</div>
      <div className="flex h-10 items-center justify-between border-t-[3px] border-[#ffa500] pl-2.5">
        <h2 className="pt-[3px] text-[17.8px] font-medium leading-none text-[#212121]">{title}</h2>
        <MdFullscreen size={31} className="-mt-px text-black" />
      </div>
      <div className="absolute -right-[15px] -top-[15px] flex gap-[15px] text-white">
        <button aria-label="Edit" className="flex size-[30px] items-center justify-center rounded-full bg-[#00bcd4] shadow-[0_1px_3px_rgba(0,0,0,0.4)]"><MdEdit size={25} /></button>
        <button aria-label="Delete" className="flex size-[30px] items-center justify-center rounded-full bg-[#00bcd4] shadow-[0_1px_3px_rgba(0,0,0,0.4)]"><MdDelete size={25} /></button>
      </div>
    </article>
  );
}

function Logo() {
  return (
    <svg viewBox="24 25 156 157" className="h-[52.3px] w-[52px]">
      <path d="M26 55 50 29 76 36 101 28 127 36 153 29 178 55 168 75 175 105 177 135 160 158 135 168 115 171 101 178 87 171 67 168 42 158 27 135 28 105 36 75Z" fill="#8cc7f8" stroke="#c9e5fc" strokeWidth="3" strokeLinejoin="round" />
      <path d="M34 56 52 37 76 43 101 36 127 43 151 37 170 56 162 71H42ZM41 78H163C161 90 171 110 170 133 160 160 120 160 101 170 80 160 42 160 34 133 33 110 43 90 41 78Z" fill="#fff" />
      <g fill="#3f9fea" fontFamily="Lato, sans-serif" textAnchor="middle" stroke="#3f9fea">
        <text x="101" y="68" fontSize="27" textLength="88" lengthAdjust="spacingAndGlyphs" strokeWidth="1.500">ROUTE</text>
        <text x="101" y="99" fontSize="24" textLength="32" lengthAdjust="spacingAndGlyphs" strokeWidth="0.500">TO</text>
        <text x="101" y="155" fontSize="70" textLength="80" lengthAdjust="spacingAndGlyphs" strokeWidth="3">PA</text>
      </g>
    </svg>
  );
}

function Person() {
  return (
    <svg viewBox="0 0 16 21" className="h-[21px] w-4" fill="#fff"><circle cx="8" cy="5" r="4.600" /><path d="M0 19.800C0 14 3 10.800 8 10.800S16 14 16 19.800Q8 20.800 0 19.800Z" /></svg>
  );
}

function Fab({ label, children, big }) {
  return (
    <button aria-label={label} className={`flex items-center justify-center rounded-full bg-[#00bcd4] shadow-[0_1px_3px_rgba(0,0,0,0.45)] ${big ? "size-[70px]" : "size-[55px]"}`}>{children}</button>
  );
}

export default function App() {
  return (
    <div className="flex h-[1127px] w-[1379px] flex-col overflow-hidden bg-[#fafafa] font-[Roboto,sans-serif]">
      <header className="flex h-[69px] shrink-0 bg-[#2196f3] text-[18.8px] text-white">
        <div className="w-[69px] pl-2 pt-2"><Logo /></div>
        <nav className="flex">
          {[["What's new", "w-[132px]"], ["Members", "w-[117px]"], ["My space", "w-[117px] bg-[#1f86da]"], ["Agora", "w-[87px]"], ["Events", "w-[93px]"], ["CoCreation", "w-[131px]"]].map(([t, c]) => (
            <a key={t} className={`whitespace-nowrap pl-px pt-[20px] text-center leading-[28px] ${c}`}>{t}</a>
          ))}
        </nav>
        <div className="ml-auto flex h-[69px] items-center pr-[17px] pt-[9px]">
          <svg viewBox="0 0 21 14" className="mr-[31px] h-[14px] w-[21px]"><rect x="0.300" y="0.300" width="20.400" height="13.600" rx="3" fill="#fff" /><path d="M2 2.500 10.500 10 19 2.500M2 12 7 7.800M19 12 14 7.800" fill="none" stroke="#2196f3" strokeWidth="1.400" /></svg>
          <span className="mr-[33px]"><Person /></span>
          <span className="mr-[35px]"><Person /></span>
          <svg viewBox="0 0 13 21" className="mr-[59px] h-[21px] w-[13px]"><path d="M1.800 6.200C1.800 .300 11.200 .300 11.200 5.800 11.200 9.500 6.600 9.600 6.600 14.500" fill="none" stroke="#fff" strokeWidth="2.800" /><rect x="5" y="17.200" width="3.300" height="3.300" fill="#fff" /></svg>
          <span className="w-[22px] text-[17.5px] leading-none text-[#666]">EN</span>
        </div>
      </header>

      <div className="flex flex-1 justify-between pl-[59px] pr-[59px]">
        <main className="mt-[60px] grid h-fit grid-cols-[500px_500px] gap-[60px]">
          <Card><LineChart /></Card>
          <Card><TuscanyMap /></Card>
          <Card title="Traffic camera"><DublinMap /></Card>
          <Card><BubbleChart /></Card>
          <Card title="Notes"><DataTable /></Card>
        </main>
        <aside className="flex h-[983px] flex-col items-center justify-between pt-[10px] text-black">
          <Fab big label="Search"><MdSearch size={42} className="-mt-px" /></Fab>
          <div className="flex flex-col items-center gap-5">
            <Fab label="Share"><MdShare size={33} /></Fab>
            <Fab label="Link"><MdLink size={33} /></Fab>
            <Fab label="Text"><MdTextFormat size={33} /></Fab>
            <Fab label="Chart"><MdAssessment size={33} /></Fab>
            <div className="-mt-[3px] text-[#212121]"><Fab big label="Add"><MdAdd size={34} className="mt-px" /></Fab></div>
          </div>
        </aside>
      </div>

      <footer className="flex h-[26px] w-[310px] items-center self-end bg-[#404040] pl-[7px] text-white shadow-[0_0_16px_rgba(0,0,0,0.4)]">
        <MdVolumeUp size={18} className="mt-1 text-[#6a6a6a]" />
        <span className="ml-[99px] pt-[3px] text-[17.8px] leading-none">Chat</span>
        <span className="ml-[9px] mt-[3px] flex h-[18px] w-5 items-center justify-center rounded-full bg-[#2bb596] text-[14px] font-bold leading-none">0</span>
      </footer>
    </div>
  );
}
